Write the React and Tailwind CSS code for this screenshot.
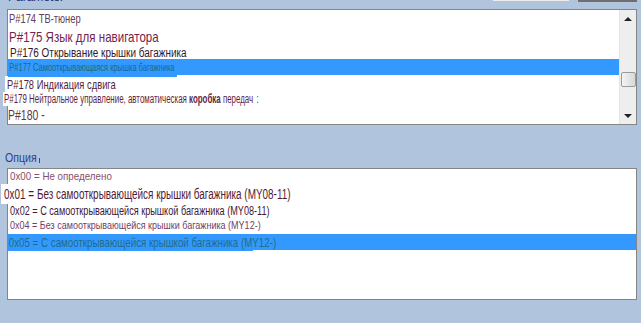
import React from "react";

const topRows = [
  { h: "h-[16px]", pad: "pl-[1px]", size: "text-[13px]", color: "text-[#63405a]", sx: "scale-x-[0.72]", text: "P#174 ТВ-тюнер" },
  { h: "h-[20px]", pad: "pl-[1px]", size: "text-[15px]", color: "text-[#74234f]", sx: "scale-x-[0.77]", text: "P#175 Язык для навигатора" },
  { h: "h-[13px]", pad: "pl-[2px]", size: "text-[12px]", color: "text-[#33172a]", sx: "scale-x-[0.83]", text: "P#176 Открывание крышки багажника" },
];

const bottomRows = [
  { h: "h-[15px]", pad: "pl-[2px]", size: "text-[11px]", color: "text-[#84506b]", sx: "scale-x-[0.89]", text: "0x00 = Не определено" },
  { h: "h-[20px]", pad: "-ml-[7px] pl-[3px]", size: "text-[14px]", color: "text-[#521a35]", sx: "scale-x-[0.71]", text: "0x01 = Без самооткрывающейся крышки багажника (MY08-11)" },
  { h: "h-[14px]", pad: "pl-[2px]", size: "text-[12px]", color: "text-[#431633]", sx: "scale-x-[0.76]", text: "0x02 = С самооткрывающейся крышкой багажника (MY08-11)" },
  { h: "h-[15px]", pad: "pl-[2px]", size: "text-[11px]", color: "text-[#734065]", sx: "scale-x-[0.82]", text: "0x04 = Без самооткрывающейся крышки багажника (MY12-)" },
];

function Row({ r }) {
  return (
    <div className={`${r.h} ${r.pad} flex items-center bg-white w-fit`}>
      <span className={`${r.size} ${r.color} ${r.sx} leading-none whitespace-nowrap inline-block origin-left`}>
        {r.text}
      </span>
    </div>
  );
}

function Scrollbar() {
  return (
    <div className="w-[17px] h-full bg-[#eeeeee] border-l border-[#e3e3e3] flex flex-col items-center">
      <div className="h-[17px] flex items-center justify-center">
        <div className="w-0 h-0 border-l-[4px] border-r-[4px] border-b-[4px] border-l-transparent border-r-transparent border-b-[#222]" />
      </div>
      <div className="flex-1 w-full flex flex-col items-center">
        <div className="mt-[45px] w-[15px] h-[15px] rounded-[2px] border border-[#9a9a9a] bg-gradient-to-r from-[#f4f4f4] to-[#d8d8d8]" />
      </div>
      <div className="h-[17px] flex items-center justify-center">
        <div className="w-0 h-0 border-l-[4px] border-r-[4px] border-t-[4px] border-l-transparent border-r-transparent border-t-[#222]" />
      </div>
    </div>
  );
}

export default function App() {
  return (
    <div className="w-[641px] h-[323px] bg-[#b0c4de] overflow-hidden font-['Liberation_Sans',Arial,sans-serif]">
      {/* header */}
      <div className="h-[9px] flex items-start">
        <div className="ml-[8px] -mt-[9px] text-[12px] leading-[12px] text-[#1f2f6f]">Parameter</div>
        <div className="ml-auto flex items-start mr-[4px]">
          <div className="w-[76px] h-[1px] bg-[#ececec]" />
          <div className="ml-[9px] w-[59px] h-[2px] bg-[#6f6f6f]" />
        </div>
      </div>

      {/* parameter list */}
      <div className="ml-[7px] w-[630px] h-[116px] border border-[#858585] bg-white flex">
        <div className="flex-1 flex flex-col">
          {topRows.map((r, i) => (
            <Row key={i} r={r} />
          ))}
          <div className="h-[16px] bg-[#3399ff] flex items-start">
            <div className="relative h-[18px] w-[169px] bg-[#3399ff] flex items-center">
              <span className="-mt-[2px] pl-[2px] text-[11px] leading-none text-[#1a6a80] whitespace-nowrap inline-block origin-left scale-x-[0.68]">
                P#177 Самооткрывающаяся крышка багажника
              </span>
            </div>
          </div>
          <div className="h-[1px]" />
          <div className="h-[16px] -ml-[3px] pl-[2px] flex items-center bg-white w-fit">
            <span className="text-[13px] leading-none text-[#55233c] whitespace-nowrap inline-block origin-left scale-x-[0.72]">
              P#178 Индикация сдвига
            </span>
          </div>
          <div className="h-[14px] -ml-[5px] pl-[1px] flex items-center bg-white w-fit">
            <span className="text-[12px] leading-none text-[#641f40] whitespace-nowrap inline-block origin-left scale-x-[0.66]">
              P#179 Нейтральное управление, автоматическая <b className="font-semibold">коробка</b> передач
              <span className="ml-[5px] text-[#1a2a8a]">:</span>
            </span>
          </div>
          <div className="h-[16px] -ml-[1px] pl-[1px] flex items-center">
            <span className="text-[15px] leading-none text-[#6a3343] whitespace-nowrap inline-block origin-left scale-x-[0.7]">
              P#180 -
            </span>
          </div>
        </div>
        <Scrollbar />
      </div>

      {/* option label */}
      <div className="h-[43px] flex items-end">
        <div className="ml-[5px] mb-[3px] flex items-center h-[14px]">
          <span className="text-[12px] leading-[14px] text-[#2e3f8a] inline-block origin-left scale-x-[0.88]">Опция</span>
          <span className="-ml-[2px] mt-[4px] w-[1px] h-[5px] bg-[#2a48b0]" />
        </div>
      </div>

      {/* option list */}
      <div className="ml-[7px] w-[630px] h-[132px] border border-[#858585] bg-white flex flex-col">
        {bottomRows.map((r, i) => (
          <Row key={i} r={r} />
        ))}
        <div className="h-[1px]" />
        <div className="h-[16px] bg-[#3399ff] flex items-start">
          <div className="relative h-[17px] w-[245px] bg-[#3399ff] flex items-center">
            <span className="-mt-[1px] pl-[1px] text-[13px] leading-none text-[#1f6d85] whitespace-nowrap inline-block origin-left scale-x-[0.75]">
              0x05 = С самооткрывающейся крышкой багажника (MY12-)
            </span>
          </div>
        </div>
      </div>
    </div>
  );
}
